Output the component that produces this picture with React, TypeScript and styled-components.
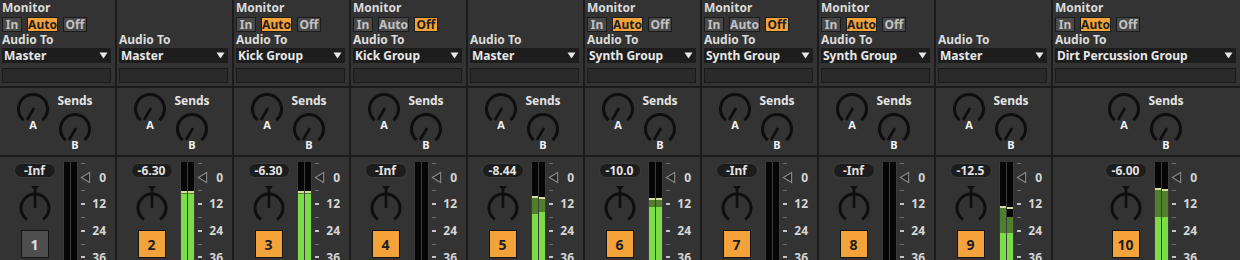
import React from 'react'
import styled, { createGlobalStyle } from 'styled-components'

const ORANGE = '#f4a23a'
const KNOB = '#0e0e0e'

type Channel = { hold: number; dark?: number; bright: number }

interface Track {
  num: number
  monitor?: 'In' | 'Auto' | 'Off'
  route: string
  volume: string
  meter?: [Channel, Channel]
  active: boolean
}

const tracks: Track[] = [
  { num: 1, monitor: 'Auto', route: 'Master', volume: '-Inf', active: false },
  { num: 2, route: 'Master', volume: '-6.30', active: true, meter: [{ hold: 29, bright: 32 }, { hold: 29, bright: 32 }] },
  { num: 3, monitor: 'Auto', route: 'Kick Group', volume: '-6.30', active: true, meter: [{ hold: 29, bright: 32 }, { hold: 29, bright: 32 }] },
  { num: 4, monitor: 'Off', route: 'Kick Group', volume: '-Inf', active: true },
  { num: 5, route: 'Master', volume: '-8.44', active: true, meter: [{ hold: 34, bright: 52 }, { hold: 35, bright: 50 }] },
  { num: 6, monitor: 'Auto', route: 'Synth Group', volume: '-10.0', active: true, meter: [{ hold: 36, bright: 45 }, { hold: 36, bright: 45 }] },
  { num: 7, monitor: 'Off', route: 'Synth Group', volume: '-Inf', active: true },
  { num: 8, monitor: 'Auto', route: 'Synth Group', volume: '-Inf', active: true },
  { num: 9, route: 'Master', volume: '-12.5', active: true, meter: [{ hold: 44, bright: 71 }, { hold: 45, dark: 55, bright: 71 }] },
  { num: 10, monitor: 'Auto', route: 'Dirt Percussion Group', volume: '-6.00', active: true, meter: [{ hold: 26, bright: 55 }, { hold: 27, bright: 55 }] },
]

const GlobalStyle = createGlobalStyle`
  body {
    margin: 0;
    background: #1b1b1b;
    font-family: "Noto Sans", "Open Sans", sans-serif;
  }
`

const Mixer = styled.div`
  display: flex;
  gap: 2px;
  width: 1240px;
  height: 260px;
  overflow: hidden;
  background: #1b1b1b;
`

const Strip = styled.div<{ $wide?: boolean }>`
  display: flex;
  flex-direction: column;
  gap: 2px;
  width: ${p => (p.$wide ? '187px' : '115px')};
  flex: ${p => (p.$wide ? '1' : 'none')};
`

const IOSection = styled.div`
  height: 86px;
  background: #333333;
  padding: 1px 4px 0 2px;
  box-sizing: border-box;
  display: flex;
  flex-direction: column;
`

const Label = styled.div`
  font-size: 12px;
  font-weight: 700;
  line-height: 14px;
  color: #dcdcdc;
  white-space: nowrap;
`

const MonitorBlock = styled.div`
  height: 32px;
  display: flex;
  flex-direction: column;
  gap: 2px;
`

const ButtonRow = styled.div`
  display: flex;
  gap: 5px;
`

const MonButton = styled.div<{ $on: boolean; $w: number }>`
  width: ${p => p.$w}px;
  height: 15px;
  box-sizing: border-box;
  border: 1px solid #1c1c1c;
  background: ${p => (p.$on ? ORANGE : '#484848')};
  color: ${p => (p.$on ? '#1e1e1e' : '#c2c2c2')};
  font-size: 12px;
  font-weight: 700;
  line-height: 13px;
  text-align: center;
`

const Dropdown = styled.div`
  margin-top: 1px;
  height: 15px;
  background: #1d1d1d;
  display: flex;
  align-items: center;
  justify-content: space-between;
  padding: 0 3px 0 2px;
  font-size: 12px;
  font-weight: 700;
  color: #e8e8e8;
  line-height: 15px;
`

const EmptyBox = styled.div`
  margin-top: 5px;
  height: 15px;
  box-sizing: border-box;
  background: #2a2a2a;
  border: 1px solid #1a1a1a;
`

const SendsSection = styled.div`
  height: 67px;
  background: #333333;
`

const Inner = styled.div<{ $offset: number }>`
  display: flex;
  width: 115px;
  margin-left: ${p => p.$offset}px;
`

const SendsInner = styled(Inner)`
  padding-top: 4px;
`

const KnobCol = styled.div<{ $ml: number }>`
  display: flex;
  flex-direction: column;
  align-items: center;
  width: 34px;
  margin-left: ${p => p.$ml}px;
`

const SendsLabel = styled(Label)`
  margin-top: 2px;
  margin-bottom: 4px;
  color: #e4e4e4;
`

const KnobLetter = styled.div`
  margin-top: -3px;
  font-size: 11px;
  font-weight: 700;
  line-height: 12px;
  color: #f0f0f0;
`

const ChannelSection = styled.div`
  flex: 1;
  background: #333333;
  overflow: hidden;
`

const LeftBlock = styled.div`
  width: 57px;
  margin-left: 6px;
  padding-top: 6px;
  display: flex;
  flex-direction: column;
  align-items: center;
`

const VolumePill = styled.div`
  width: 42px;
  height: 15px;
  box-sizing: border-box;
  border-radius: 8px;
  background: #1c1c1c;
  border: 1px solid #3e3e3e;
  color: #e2e2e2;
  font-size: 12px;
  font-weight: 700;
  line-height: 13px;
  text-align: center;
`

const PanSvg = styled.svg`
  margin-top: 8px;
  display: block;
`

const TrackNum = styled.div<{ $active: boolean }>`
  margin-top: 6px;
  width: 28px;
  height: 28px;
  box-sizing: border-box;
  border: 1px solid #141414;
  background: ${p => (p.$active ? ORANGE : '#4e4e4e')};
  color: ${p => (p.$active ? '#1e1e1e' : '#e0e0e0')};
  font-size: 14px;
  font-weight: 700;
  display: flex;
  align-items: center;
  justify-content: center;
`

const MeterBox = styled.div`
  margin-top: 5px;
  width: 15px;
  height: 110px;
  box-sizing: border-box;
  padding: 0 1px;
  gap: 1px;
  background: #3c3c3c;
  display: flex;
`

const MeterChannel = styled.div`
  flex: 1;
  background: #050505;
  display: flex;
  flex-direction: column;
`

const Seg = styled.div<{ $c: string }>`
  flex: none;
  background: ${p => p.$c};
`

const BrightSeg = styled.div`
  flex: 1;
  background: #7bdc47;
`

const Scale = styled.div`
  margin-left: 2px;
  display: flex;
  flex-direction: column;
`

const ScaleRow = styled.div`
  height: 13.4px;
  display: flex;
  align-items: center;
`

const TickArea = styled.div`
  width: 11px;
  display: flex;
  align-items: center;
`

const Tick = styled.div<{ $major?: boolean }>`
  margin-left: 1px;
  width: 4px;
  height: ${p => (p.$major ? 2 : 1)}px;
  background: ${p => (p.$major ? '#c4c4c4' : '#6e6e6e')};
`

const ScaleNum = styled.div`
  width: 15px;
  text-align: right;
  font-size: 12px;
  font-weight: 700;
  line-height: 13px;
  color: #d6d6d6;
`

function SendKnob({ letter }: { letter: string }) {
  return (
    <>
      <svg width={34} height={30} viewBox="0 0 34 30">
        <path d="M 7.68 28.1 A 14.5 14.5 0 1 1 26.32 28.1" fill="none" stroke={KNOB} strokeWidth={3} />
        <line x1={18} y1={16} x2={11} y2={28} stroke={KNOB} strokeWidth={2.6} />
      </svg>
      <KnobLetter>{letter}</KnobLetter>
    </>
  )
}

function PanKnob() {
  return (
    <PanSvg width={34} height={38} viewBox="0 0 34 38">
      <polygon points="13,0 21,0 17,5" fill={KNOB} />
      <line x1={17} y1={4} x2={17} y2={22} stroke={KNOB} strokeWidth={2.6} />
      <path d="M 8.97 33.47 A 14 14 0 1 1 25.03 33.47" fill="none" stroke={KNOB} strokeWidth={3} />
    </PanSvg>
  )
}

function MeterBar({ ch }: { ch?: Channel }) {
  if (!ch) return <MeterChannel />
  const darkStart = ch.dark ?? ch.hold + 2
  return (
    <MeterChannel>
      <Seg $c="#050505" style={{ height: ch.hold }} />
      <Seg $c="#d2dd98" style={{ height: 2 }} />
      <Seg $c="#050505" style={{ height: Math.max(0, darkStart - ch.hold - 2) }} />
      <Seg $c="#4f7f2a" style={{ height: Math.max(0, ch.bright - darkStart) }} />
      <BrightSeg />
    </MeterChannel>
  )
}

function DbScale() {
  const rows: (string | null)[] = [null, '0', null, '12', null, '24', null, '36']
  return (
    <Scale>
      {rows.map((r, i) => (
        <ScaleRow key={i}>
          <TickArea>
            {r === '0' ? (
              <svg width={12} height={13} viewBox="0 0 12 13">
                <polygon points="10.5,1 10.5,12 1.5,6.5" fill="#262626" stroke="#8a8a8a" strokeWidth={1.2} />
              </svg>
            ) : (
              <Tick $major={r !== null} />
            )}
          </TickArea>
          {r && <ScaleNum>{r}</ScaleNum>}
        </ScaleRow>
      ))}
    </Scale>
  )
}

function Arrow() {
  return (
    <svg width={9} height={7} viewBox="0 0 9 7">
      <polygon points="0.5,0.5 8.5,0.5 4.5,6.5" fill="#e8e8e8" />
    </svg>
  )
}

const monWidths = { In: 20, Auto: 31, Off: 24 }

function ChannelStrip({ t, wide }: { t: Track; wide?: boolean }) {
  const offset = wide ? 38 : 0
  return (
    <Strip $wide={wide}>
      <IOSection>
        <MonitorBlock>
          {t.monitor && (
            <>
              <Label>Monitor</Label>
              <ButtonRow>
                {(['In', 'Auto', 'Off'] as const).map(m => (
                  <MonButton key={m} $on={t.monitor === m} $w={monWidths[m]}>
                    {m}
                  </MonButton>
                ))}
              </ButtonRow>
            </>
          )}
        </MonitorBlock>
        <Label>Audio To</Label>
        <Dropdown>
          <span>{t.route}</span>
          <Arrow />
        </Dropdown>
        <EmptyBox />
      </IOSection>
      <SendsSection>
        <SendsInner $offset={offset}>
          <KnobCol $ml={16}>
            <SendKnob letter="A" />
          </KnobCol>
          <KnobCol $ml={8}>
            <SendsLabel>Sends</SendsLabel>
            <SendKnob letter="B" />
          </KnobCol>
        </SendsInner>
      </SendsSection>
      <ChannelSection>
        <Inner $offset={offset}>
          <LeftBlock>
            <VolumePill>{t.volume}</VolumePill>
            <PanKnob />
            <TrackNum $active={t.active}>{t.num}</TrackNum>
          </LeftBlock>
          <MeterBox>
            <MeterBar ch={t.meter?.[0]} />
            <MeterBar ch={t.meter?.[1]} />
          </MeterBox>
          <DbScale />
        </Inner>
      </ChannelSection>
    </Strip>
  )
}

export default function App() {
  return (
    <>
      <GlobalStyle />
      <Mixer>
        {tracks.map((t, i) => (
          <ChannelStrip key={t.num} t={t} wide={i === tracks.length - 1} />
        ))}
      </Mixer>
    </>
  )
}
